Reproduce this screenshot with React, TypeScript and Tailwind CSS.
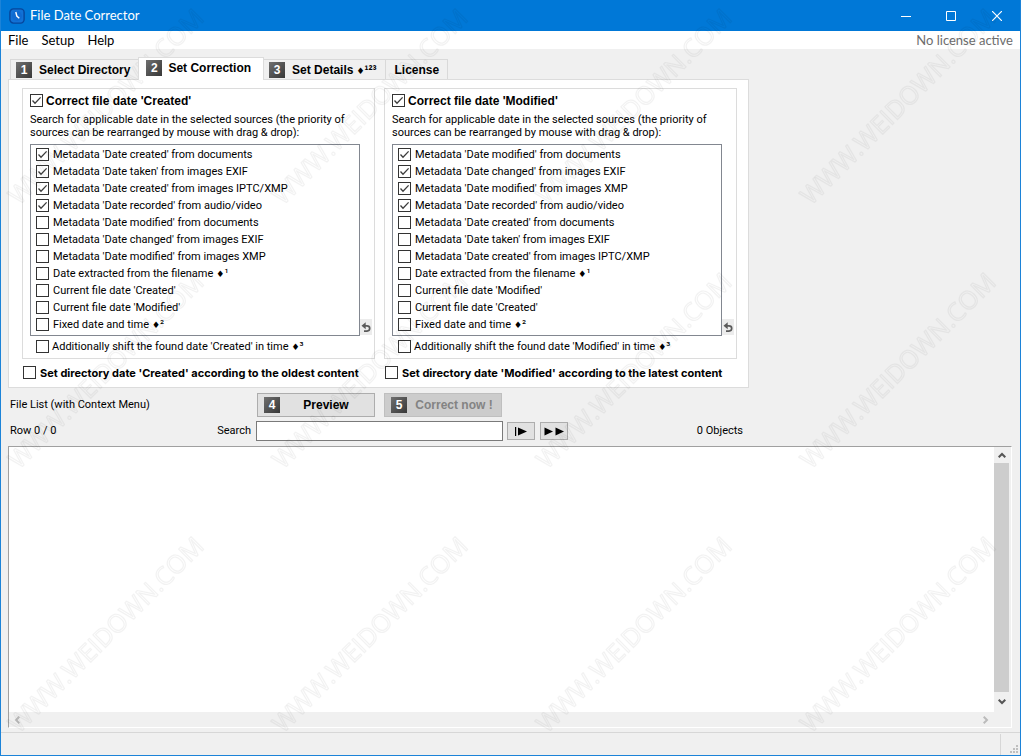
import { useState } from "react";
import type { ReactNode } from "react";

interface Source {
    label: string
    mark?: string
    checked?: boolean
}
interface DateGroupProps {
    kind: "Created" | "Modified"
    sources: Source[]
}

const createdSources: Source[] = [
    { label: "Metadata 'Date created' from documents", checked: true },
    { label: "Metadata 'Date taken' from images EXIF", checked: true },
    { label: "Metadata 'Date created' from images IPTC/XMP", checked: true },
    { label: "Metadata 'Date recorded' from audio/video", checked: true },
    { label: "Metadata 'Date modified' from documents" },
    { label: "Metadata 'Date changed' from images EXIF" },
    { label: "Metadata 'Date modified' from images XMP" },
    { label: "Date extracted from the filename", mark: "¹" },
    { label: "Current file date 'Created'" },
    { label: "Current file date 'Modified'" },
    { label: "Fixed date and time", mark: "²" },
];

const modifiedSources: Source[] = [
    { label: "Metadata 'Date modified' from documents", checked: true },
    { label: "Metadata 'Date changed' from images EXIF", checked: true },
    { label: "Metadata 'Date modified' from images XMP", checked: true },
    { label: "Metadata 'Date recorded' from audio/video", checked: true },
    { label: "Metadata 'Date created' from documents" },
    { label: "Metadata 'Date taken' from images EXIF" },
    { label: "Metadata 'Date created' from images IPTC/XMP" },
    { label: "Date extracted from the filename", mark: "¹" },
    { label: "Current file date 'Modified'" },
    { label: "Current file date 'Created'" },
    { label: "Fixed date and time", mark: "²" },
];

const tabs = [
    { step: "1", label: "Select Directory" },
    { step: "2", label: "Set Correction" },
    { step: "3", label: "Set Details", mark: "¹²³" },
    { label: "License" },
];

function Check({ checked = false, children, className = "" }: { checked?: boolean, children: ReactNode, className?: string }) {
    return (
        <label className={`flex items-center ${className}`}>
            <span className="grid shrink-0">
                <input type="checkbox" defaultChecked={checked} className="peer col-start-1 row-start-1 size-[13px] appearance-none border border-[#333] bg-white" />
                <svg viewBox="0 0 13 13" className="pointer-events-none invisible col-start-1 row-start-1 size-[13px] peer-checked:visible" fill="none" stroke="#3c3c3c" strokeWidth="1.3">
                    <path d="M2.5 6.5 L5 9.2 L10.6 3.4" />
                </svg>
            </span>
            <span className="pt-[2px] whitespace-nowrap">{children}</span>
        </label>
    );
}

function Mark({ value }: { value: string }) {
    return <><span className="ml-[3px] font-['DejaVu_Sans',sans-serif] text-[9px]">♦</span>{value}</>;
}

function StepBadge({ value }: { value: string }) {
    return (
        <span className="flex size-4 items-center justify-center bg-linear-to-br from-[#707070] to-[#383838] text-[12px] leading-4 font-bold text-white">{value}</span>
    );
}

function DateGroup({ kind, sources }: DateGroupProps) {
    return (
        <section className="flex w-[353px] flex-col border border-[#dcdcdc] pt-1 pb-1 pl-[7px]">
            <Check checked className="h-[14px] gap-[3px] font-['Liberation_Sans',sans-serif] text-[12px] font-bold">
                Correct file date '{kind}'
            </Check>
            <p className="mt-[6px] mb-[5px] leading-[13px]">
                Search for applicable date in the selected sources (the priority of
                <br />
                sources can be rearranged by mouse with drag &amp; drop):
            </p>
            <div className="flex items-end">
                <ul className="w-[330px] border border-[#828790] pt-px pb-[2px] pl-[5px]">
                    {sources.map((source) => (
                        <li key={source.label}>
                            <Check checked={source.checked} className="h-[17px] gap-1">
                                {source.label}
                                {source.mark && <Mark value={source.mark} />}
                            </Check>
                        </li>
                    ))}
                </ul>
                <button type="button" aria-label={`Reset order for ${kind}`} className="mb-px h-4 w-3 bg-[#ececec]">
                    <svg viewBox="0 0 12 16" className="h-4 w-3" fill="none" stroke="#5a5a5a" strokeWidth="1.7">
                        <path d="M4 12.1 H7 Q9.7 12 9.7 9.3 Q9.7 6.8 7 6.8 H4.5" />
                        <path d="M1.5 6.8 L5.7 3.2 V10.2 Z" fill="#5a5a5a" stroke="none" />
                    </svg>
                </button>
            </div>
            <Check className="mt-[2px] ml-[6px] h-4 gap-[3px]">
                Additionally shift the found date '{kind}' in time<Mark value="³" />
            </Check>
        </section>
    );
}

// diagonal outlined stamp repeated over the whole window
function Watermark() {
    return (
        <svg className="pointer-events-none absolute inset-0 size-full" aria-hidden="true">
            <defs>
                <pattern id="stamp" width="264" height="264" patternUnits="userSpaceOnUse" y="-55">
                    <text transform="translate(18 261) rotate(-45)" fontSize="25" fill="none" stroke="#000" strokeOpacity="0.05" strokeWidth="1.2" strokeLinejoin="round" className="font-['Open_Sans',sans-serif]">
                        WWW.WEIDOWN.COM
                    </text>
                </pattern>
            </defs>
            <rect width="100%" height="100%" fill="url(#stamp)" />
        </svg>
    );
}

function App() {
    const [activeTab, setActiveTab] = useState("Set Correction");

    return (
        <div className="relative flex min-h-screen flex-col border-x border-b border-[#1c83d8] bg-[#f0f0f0] font-[Roboto,sans-serif] text-[11px] text-black">
            <header className="flex h-[31px] items-center bg-[#0078d7] pl-2 text-white">
                <svg viewBox="0 0 16 16" className="size-4" fill="none">
                    <rect x="0.9" y="0.9" width="14.2" height="14.2" rx="3.5" fill="#1272d6" stroke="#06469c" strokeWidth="1.4" />
                    <circle cx="8" cy="8" r="5" fill="#0f6ad0" />
                    <path d="M6.8 4 L7.8 8 L10.3 10.2" stroke="#fff" strokeWidth="1.4" />
                </svg>
                <h1 className="ml-[5px] flex-1 font-[Lato,sans-serif] text-[13px]">File Date Corrector</h1>
                <button type="button" aria-label="Minimize" className="flex h-full w-[45px] items-center justify-center">
                    <svg viewBox="0 0 10 10" className="size-[10px]" stroke="#fff"><path d="M0 5.5 H10" /></svg>
                </button>
                <button type="button" aria-label="Maximize" className="flex h-full w-[46px] items-center justify-center">
                    <svg viewBox="0 0 10 10" className="size-[10px]" stroke="#fff" fill="none"><path d="M0.5 0.5 H9.5 V9.5 H0.5 Z" /></svg>
                </button>
                <button type="button" aria-label="Close" className="flex h-full w-[46px] items-center justify-center">
                    <svg viewBox="0 0 10 10" className="size-[10px]" stroke="#fff" strokeWidth="1.2"><path d="M0 0 L10 10 M10 0 L0 10" /></svg>
                </button>
            </header>
            <nav className="flex h-[18px] items-center gap-[13px] bg-white px-[7px] pt-[2px] font-[Lato,sans-serif] text-[13px]">
                <button type="button">File</button>
                <button type="button">Setup</button>
                <button type="button">Help</button>
                <span className="ml-auto text-[#6d6d6d]">No license active</span>
            </nav>

            <main className="flex flex-1 flex-col pt-2 pr-2 pb-1 pl-[7px]">
                <div role="tablist" className="flex h-[23px] items-end pl-[2px] font-['Liberation_Sans',sans-serif] text-[12px] font-bold">
                    {tabs.map((tab) => (
                        <button
                            key={tab.label}
                            type="button"
                            role="tab"
                            aria-selected={activeTab === tab.label}
                            onClick={() => setActiveTab(tab.label)}
                            className={
                                activeTab === tab.label
                                    ? "relative z-10 -mr-px flex h-[23px] items-center gap-[6px] border border-b-0 border-[#dcdcdc] bg-white pr-3 pb-[3px] pl-[7px]"
                                    : "-mr-px flex h-[21px] items-center gap-[7px] border border-b-0 border-[#d9d9d9] pr-2 pl-[5px]"
                            }
                        >
                            {tab.step && <StepBadge value={tab.step} />}
                            <span className={tab.step ? "" : "pl-1"}>
                                {tab.label}
                                {tab.mark && <Mark value={tab.mark} />}
                            </span>
                        </button>
                    ))}
                </div>
                <div className="-mt-px w-[741px] border border-[#dcdcdc] bg-white pt-2 pb-[7px] pl-[13px]">
                    <div className="flex gap-[9px]">
                        <DateGroup kind="Created" sources={createdSources} />
                        <DateGroup kind="Modified" sources={modifiedSources} />
                    </div>
                    <div className="mt-[6px] flex pl-px font-[Inter,sans-serif] font-bold">
                        <Check className="h-[15px] w-[362px] gap-1">Set directory date 'Created' according to the oldest content</Check>
                        <Check className="h-[15px] gap-1">Set directory date 'Modified' according to the latest content</Check>
                    </div>
                </div>

                <div className="mt-[5px] flex items-center pl-[2px]">
                    <span className="w-[247px]">File List (with Context Menu)</span>
                    <button type="button" className="flex h-6 w-[118px] items-center border border-[#adadad] bg-[#e1e1e1] pl-[6px] font-['Liberation_Sans',sans-serif] text-[12px] font-bold">
                        <StepBadge value="4" />
                        <span className="flex-1 pr-[2px]">Preview</span>
                    </button>
                    <button type="button" disabled className="ml-[9px] flex h-6 w-[118px] items-center border border-[#bfbfbf] bg-[#cccccc] pl-[6px] font-['Liberation_Sans',sans-serif] text-[12px] font-bold text-[#838383]">
                        <StepBadge value="5" />
                        <span className="flex-1">Correct now !</span>
                    </button>
                </div>
                <div className="mt-1 flex w-[735px] items-center pl-[2px]">
                    <span>Row 0 / 0</span>
                    <label htmlFor="search" className="ml-auto pr-[5px]">Search</label>
                    <input id="search" type="text" className="h-5 w-[247px] border border-[#7a7a7a] bg-white px-1" />
                    <button type="button" aria-label="Find from start" className="ml-1 flex h-[18px] w-7 items-center justify-center border border-[#adadad] bg-[#e1e1e1]">
                        <svg viewBox="0 0 14 9" className="h-[9px] w-[14px]"><path d="M1 0 H2.2 V9 H1 Z M4 0.5 L13 4.5 L4 8.5 Z" /></svg>
                    </button>
                    <button type="button" aria-label="Find next" className="ml-[5px] flex h-[18px] w-7 items-center justify-center border border-[#adadad] bg-[#e1e1e1]">
                        <svg viewBox="0 0 20 9" className="h-[9px] w-5"><path d="M0.5 0.5 L9 4.5 L0.5 8.5 Z M11.5 0.5 L20 4.5 L11.5 8.5 Z" /></svg>
                    </button>
                    <span className="w-[175px] text-right">0 Objects</span>
                </div>

                <div className="mt-[5px] flex flex-1 flex-col border border-t-[#a0a0a0] border-r-white border-b-white border-l-[#a0a0a0] bg-white">
                    <div className="flex flex-1">
                        <div className="flex-1" />
                        <div className="flex w-[17px] flex-col bg-[#f0f0f0]">
                            <button type="button" aria-label="Scroll up" className="flex h-4 w-[15px] items-center justify-center">
                                <svg viewBox="0 0 8 6" className="h-[6px] w-2" fill="none" stroke="#555" strokeWidth="2"><path d="M0.7 5.3 L4 2 L7.3 5.3" /></svg>
                            </button>
                            <div className="w-[15px] flex-1 bg-[#cdcdcd]" />
                            <button type="button" aria-label="Scroll down" className="flex h-5 w-[15px] items-center justify-center">
                                <svg viewBox="0 0 8 6" className="h-[6px] w-2" fill="none" stroke="#555" strokeWidth="2"><path d="M0.7 0.7 L4 4 L7.3 0.7" /></svg>
                            </button>
                        </div>
                    </div>
                    <div className="flex h-[15px] items-center justify-between bg-[#f0f0f0] pr-[22px] pl-[5px]">
                        <button type="button" aria-label="Scroll left">
                            <svg viewBox="0 0 6 8" className="h-2 w-[6px]" fill="none" stroke="#bbb" strokeWidth="2"><path d="M5.3 0.7 L2 4 L5.3 7.3" /></svg>
                        </button>
                        <button type="button" aria-label="Scroll right">
                            <svg viewBox="0 0 6 8" className="h-2 w-[6px]" fill="none" stroke="#bbb" strokeWidth="2"><path d="M0.7 0.7 L4 4 L0.7 7.3" /></svg>
                        </button>
                    </div>
                </div>
            </main>

            <footer className="flex h-[23px] items-end justify-end border-t border-[#d7d7d7]">
                <div className="flex h-[21px] w-5 items-end justify-end border-l border-[#d7d7d7] pr-[2px] pb-[2px]">
                    <svg viewBox="0 0 8 8" className="size-2" fill="#bfbfbf">
                        <path d="M6 0 H8 V2 H6 Z M3 3 H5 V5 H3 Z M6 3 H8 V5 H6 Z M0 6 H2 V8 H0 Z M3 6 H5 V8 H3 Z M6 6 H8 V8 H6 Z" />
                    </svg>
                </div>
            </footer>
            <Watermark />
        </div>
    );
}
export default App;
